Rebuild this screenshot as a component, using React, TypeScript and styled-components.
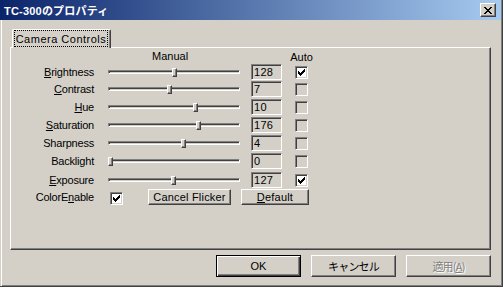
import React from "react";
import styled, { createGlobalStyle, css } from "styled-components";

const Global = createGlobalStyle`
  html, body { margin: 0; padding: 0; background: #d4d0c8; }
  body {
    font-family: "Liberation Sans", "Noto Sans CJK JP", sans-serif;
    font-size: 11px;
    color: #000;
  }
  * { box-sizing: border-box; }
`;

const FACE = "#d4d0c8";
const SHADOW = "#808080";
const DARK = "#404040";

const raised = css`
  border: 1px solid;
  border-color: #fff ${DARK} ${DARK} #fff;
  box-shadow: inset -1px -1px ${SHADOW};
  background: ${FACE};
`;

const sunken = css`
  border: 1px solid;
  border-color: ${SHADOW} #fff #fff ${SHADOW};
  box-shadow: inset 1px 1px ${DARK}, inset -1px -1px ${FACE};
`;

const Window = styled.div`
  width: 503px;
  height: 287px;
  background: ${FACE};
  display: flex;
  flex-direction: column;
  border-right: 1px solid ${DARK};
  border-bottom: 1px solid ${DARK};
  box-shadow: inset -1px -1px ${SHADOW};
  overflow: hidden;
`;

const TitleBar = styled.div`
  height: 20px;
  flex: none;
  display: flex;
  align-items: center;
  justify-content: space-between;
  padding: 0 5px 0 4px;
  margin-right: 1px;
  background: linear-gradient(to right, #0a246a, #a6caf0);
`;

const TitleText = styled.span`
  color: #fff;
  font-weight: bold;
  font-size: 11px;
  font-family: "Liberation Sans", "Noto Sans CJK JP", sans-serif;
  letter-spacing: 0.2px;
`;

const CloseButton = styled.div`
  ${raised};
  width: 16px;
  height: 14px;
  display: flex;
  align-items: center;
  justify-content: center;
  padding-right: 1px;
`;

const Body = styled.div`
  flex: 1;
  display: flex;
  flex-direction: column;
  padding: 9px 10px 0 10px;
  box-shadow: inset 1px 0 ${FACE}, inset 2px 0 #fff;
`;

const TabStrip = styled.div`
  display: flex;
  padding-left: 2px;
  position: relative;
  z-index: 1;
  margin-bottom: -1px;
`;

const Tab = styled.div`
  width: 99px;
  height: 19px;
  background: ${FACE};
  border-left: 1px solid #fff;
  border-top: 1px solid #fff;
  border-right: 1px solid ${DARK};
  border-top-left-radius: 2px;
  border-top-right-radius: 2px;
  box-shadow: inset -1px 0 ${SHADOW};
  padding: 0 2px 1px 1px;
  display: flex;
`;

const TabLabel = styled.div`
  flex: 1;
  border: 1px dotted #000;
  display: flex;
  align-items: center;
  justify-content: center;
  letter-spacing: 0.5px;
`;

const Panel = styled.div`
  width: 481px;
  height: 203px;
  border-left: 1px solid #fff;
  border-top: 1px solid #fff;
  border-right: 1px solid ${DARK};
  border-bottom: 1px solid ${DARK};
  box-shadow: inset -1px -1px ${SHADOW};
  display: flex;
  flex-direction: column;
`;

const Grid = styled.div<{ $mt?: number }>`
  display: grid;
  grid-template-columns: 97px 143px 44px 13px;
  height: 16px;
  align-items: center;
  margin-top: ${(p) => p.$mt ?? 0}px;
`;

const Header = styled(Grid)`
  height: 16px;
`;

const ManualHead = styled.div`
  grid-column: 2;
  padding-left: 44px;
`;

const AutoHead = styled.div`
  grid-column: 4;
  justify-self: center;
  white-space: nowrap;
  margin-top: 1px;
`;

const Label = styled.div`
  text-align: right;
  margin-right: 14px;
  white-space: nowrap;
  letter-spacing: -0.2px;
`;

const Mn = styled.span`
  text-decoration: underline;
`;

const SliderBox = styled.div`
  position: relative;
  width: 132px;
  height: 16px;
  display: flex;
  align-items: center;
`;

const Track = styled.div`
  width: 100%;
  height: 4px;
  border-top: 1px solid ${SHADOW};
  border-left: 1px solid ${SHADOW};
  border-bottom: 1px solid #fff;
  border-right: 1px solid #fff;
  background: ${FACE};
  box-shadow: inset 1px 1px ${DARK};
`;

const Thumb = styled.div`
  position: absolute;
  top: 4px;
  width: 5px;
  height: 9px;
  border-left: 1px solid #fff;
  border-top: 1px solid #fff;
  border-right: 1px solid ${DARK};
  border-bottom: 1px solid ${DARK};
  box-shadow: inset -1px -1px ${SHADOW};
  background: ${FACE};
`;

const Edit = styled.div`
  ${sunken};
  width: 31px;
  height: 16px;
  padding-left: 2px;
  line-height: 14px;
  background: ${FACE};
  letter-spacing: 0.3px;
`;

const CheckBox = styled.div<{ $on: boolean }>`
  ${sunken};
  width: 13px;
  height: 13px;
  flex: none;
  background: ${(p) => (p.$on ? "#fff" : FACE)};
  display: flex;
  align-items: center;
  justify-content: center;
`;

const BottomRow = styled(Grid)`
  height: 16px;
`;

const BottomControls = styled.div`
  grid-column: 2 / -1;
  display: flex;
  align-items: center;
  width: 220px;
`;

const ColorCheck = styled(CheckBox)`
  margin-left: 2px;
  margin-top: 3px;
  margin-right: 25px;
`;

const Button = styled.div<{ $w: number; $h: number; $default?: boolean; $disabled?: boolean }>`
  ${raised};
  width: ${(p) => p.$w}px;
  height: ${(p) => p.$h}px;
  flex: none;
  display: flex;
  align-items: center;
  justify-content: center;
  white-space: nowrap;
  ${(p) =>
    p.$default &&
    css`
      border: 1px solid #000;
      box-shadow: inset 1px 1px #fff, inset -1px -1px ${DARK}, inset -2px -2px ${SHADOW};
    `}
  ${(p) =>
    p.$disabled &&
    css`
      color: ${SHADOW};
      text-shadow: 1px 1px #fff;
    `}
`;

const SmallButton = styled(Button)`
  letter-spacing: 0.2px;
  & + & {
    margin-left: 10px;
  }
`;

const Footer = styled.div`
  display: flex;
  justify-content: flex-end;
  gap: 10px;
  margin-top: 5px;
  width: 481px;
`;

const Jp = styled.span`
  font-family: "Noto Sans CJK JP", sans-serif;
  font-size: 11px;
  letter-spacing: -0.8px;
`;

const Check = () => (
  <svg width="7" height="7" viewBox="0 0 7 7" shapeRendering="crispEdges">
    <path
      fill="#000"
      d="M6 0h1v1h-1z M5 1h2v1h-2z M0 2h1v1h-1z M4 2h3v1h-3z M0 3h2v1h-2z M3 3h3v1h-3z M0 4h5v1h-5z M1 5h3v1h-3z M2 6h1v1h-1z"
    />
  </svg>
);

const CloseGlyph = () => (
  <svg width="8" height="7" viewBox="0 0 8 7" shapeRendering="crispEdges">
    <path
      fill="#000"
      d="M0 0h2v1h-2z M6 0h2v1h-2z M1 1h2v1h-2z M5 1h2v1h-2z M2 2h4v1h-4z M3 3h2v1h-2z M2 4h4v1h-4z M1 5h2v1h-2z M5 5h2v1h-2z M0 6h2v1h-2z M6 6h2v1h-2z"
    />
  </svg>
);

type Ctrl = { label: string; mn: number; value: number; max: number; auto: boolean; mt: number };

const controls: Ctrl[] = [
  { label: "Brightness", mn: 0, value: 128, max: 255, auto: true, mt: 0 },
  { label: "Contrast", mn: 0, value: 7, max: 15, auto: false, mt: 1 },
  { label: "Hue", mn: 0, value: 10, max: 15, auto: false, mt: 2 },
  { label: "Saturation", mn: 0, value: 176, max: 255, auto: false, mt: 2 },
  { label: "Sharpness", mn: -1, value: 4, max: 7, auto: false, mt: 2 },
  { label: "Backlight", mn: -1, value: 0, max: 1, auto: false, mt: 2 },
  { label: "Exposure", mn: 0, value: 127, max: 255, auto: true, mt: 3 },
];

const Mnemonic = ({ text, at }: { text: string; at: number }) =>
  at < 0 ? (
    <>{text}</>
  ) : (
    <>
      {text.slice(0, at)}
      <Mn>{text[at]}</Mn>
      {text.slice(at + 1)}
    </>
  );

export default function App() {
  return (
    <>
      <Global />
      <Window>
        <TitleBar>
          <TitleText>TC-300のプロパティ</TitleText>
          <CloseButton>
            <CloseGlyph />
          </CloseButton>
        </TitleBar>
        <Body>
          <TabStrip>
            <Tab>
              <TabLabel>Camera Controls</TabLabel>
            </Tab>
          </TabStrip>
          <Panel>
            <Header>
              <ManualHead>Manual</ManualHead>
              <AutoHead>Auto</AutoHead>
            </Header>
            {controls.map((c) => (
              <Grid key={c.label} $mt={c.mt}>
                <Label>
                  <Mnemonic text={c.label} at={c.mn} />
                </Label>
                <SliderBox>
                  <Track />
                  <Thumb style={{ left: Math.round((c.value / c.max) * 127) }} />
                </SliderBox>
                <Edit>{c.value}</Edit>
                <CheckBox $on={c.auto}>{c.auto && <Check />}</CheckBox>
              </Grid>
            ))}
            <BottomRow $mt={1}>
              <Label>
                <Mnemonic text="ColorEnable" at={6} />
              </Label>
              <BottomControls>
                <ColorCheck $on>
                  <Check />
                </ColorCheck>
                <SmallButton $w={83} $h={16}>
                  Cancel Flicker
                </SmallButton>
                <SmallButton $w={68} $h={16}>
                  <Mnemonic text="Default" at={0} />
                </SmallButton>
              </BottomControls>
            </BottomRow>
          </Panel>
          <Footer>
            <Button $w={85} $h={22} $default>
              OK
            </Button>
            <Button $w={85} $h={22}>
              <Jp>キャンセル</Jp>
            </Button>
            <Button $w={85} $h={22} $disabled>
              <Jp>
                適用(<Mn>A</Mn>)
              </Jp>
            </Button>
          </Footer>
        </Body>
      </Window>
    </>
  );
}
